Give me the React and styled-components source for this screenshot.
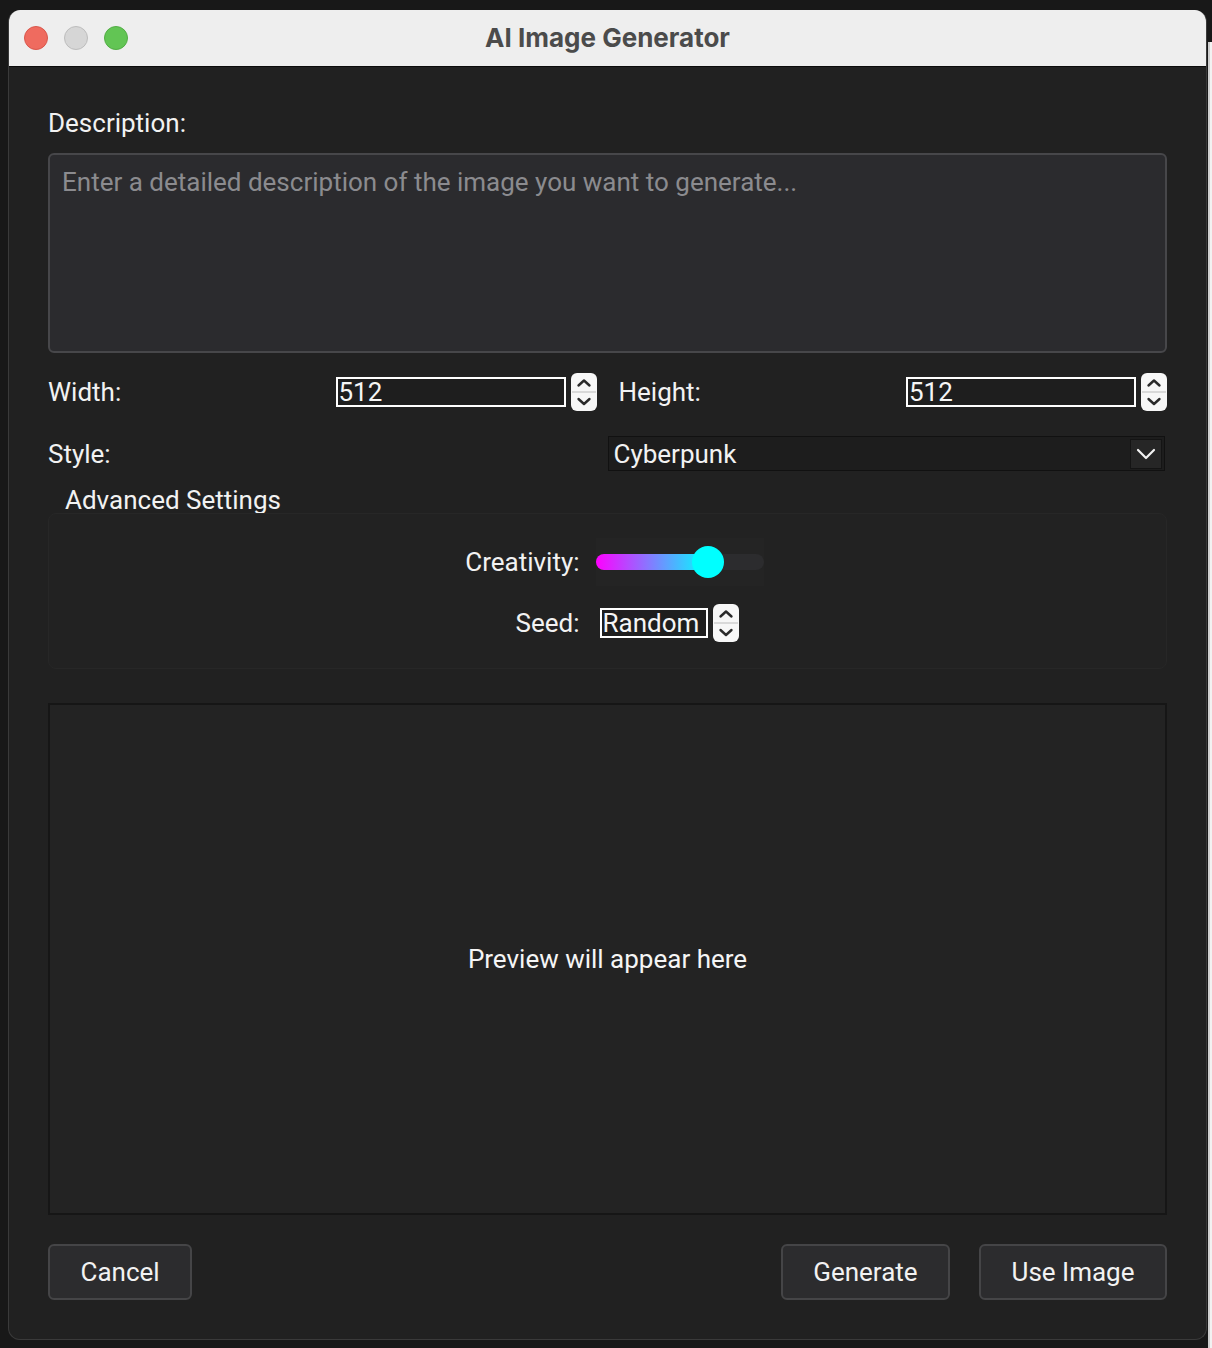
import React from "react";
import styled, { createGlobalStyle } from "styled-components";

const Global = createGlobalStyle`
  html, body { margin: 0; padding: 0; background: #181818; }
  body { font-family: Roboto, "Noto Sans", "Liberation Sans", sans-serif; }
  * { box-sizing: border-box; }
`;

const Desktop = styled.div`
  display: flex;
  align-items: flex-start;
  padding: 10px 0 9px 8px;
  width: 1212px;
`;

const BackWindow = styled.div`
  flex-shrink: 0;
  width: 4px;
  height: 1306px;
  margin-top: 32px;
  margin-left: 1px;
  background: linear-gradient(90deg, #cfcfcf 0 2px, #f2f2f2 2px);
`;

const Window = styled.div`
  flex-shrink: 0;
  width: 1199px;
  background: #212121;
  border-radius: 12px;
  border: 1px solid #3a3a3a;
  border-top: none;
  overflow: hidden;
  display: flex;
  flex-direction: column;
`;

const TitleBar = styled.div`
  position: relative;
  height: 57px;
  background: #eeeeee;
  border-bottom: 1px solid #0c0c0c;
  display: flex;
  align-items: center;
  justify-content: center;
`;

const Lights = styled.div`
  position: absolute;
  left: 15px;
  top: 16px;
  display: flex;
  gap: 16px;
`;

const Light = styled.span`
  width: 24px;
  height: 24px;
  border-radius: 50%;
  background: ${(p) => p.$c};
  border: 1px solid ${(p) => p.$b};
`;

const Title = styled.div`
  font-family: Inter, Roboto, "Liberation Sans", sans-serif;
  font-weight: 700;
  font-size: 26px;
  color: #4b4b4b;
  margin-top: -2px;
`;

const Content = styled.div`
  display: flex;
  flex-direction: column;
  padding: 41px 39px 39px 39px;
  color: #f2f2f2;
`;

const Label = styled.div`
  font-size: 26px;
  line-height: 30px;
  color: #f2f2f2;
  white-space: nowrap;
  text-align: ${(p) => p.$align || "left"};
`;

const TextArea = styled.textarea`
  margin-top: 15px;
  height: 200px;
  width: 100%;
  resize: none;
  background: #2b2b2e;
  border: 2px solid #47474a;
  border-radius: 6px;
  padding: 12px 12px;
  font-family: Roboto, "Liberation Sans", sans-serif;
  font-size: 26px;
  color: #f2f2f2;
  outline: none;
  &::placeholder { color: #8b8b8f; }
`;

const SizeRow = styled.div`
  margin-top: 20px;
  display: grid;
  grid-template-columns: 1fr 1fr;
  column-gap: 22px;
`;

const Field = styled.div`
  display: flex;
  align-items: center;
  height: 38px;
`;

const Grow = styled.div`
  flex: 1;
`;

const NumInput = styled.div`
  width: ${(p) => p.$w}px;
  height: 30px;
  border: 2px solid #ffffff;
  background: #1e1e1e;
  font-size: 26px;
  line-height: 27px;
  color: #f5f5f5;
  padding-left: 1px;
  margin-right: 5px;
  overflow: hidden;
`;

const SpinBox = styled.div`
  width: 26px;
  height: 38px;
  border-radius: 6px;
  background: #f7f7f7;
  display: flex;
`;

const Spinner = () => (
  <SpinBox>
    <svg width="26" height="38" viewBox="0 0 26 38">
      <line x1="1" y1="19" x2="25" y2="19" stroke="#cfcfcf" strokeWidth="1.5" />
      <polyline points="7.5,12.5 13,7.5 18.5,12.5" fill="none" stroke="#2a2a2a" strokeWidth="2.4" strokeLinecap="round" strokeLinejoin="round" />
      <polyline points="7.5,26 13,31 18.5,26" fill="none" stroke="#2a2a2a" strokeWidth="2.4" strokeLinecap="round" strokeLinejoin="round" />
    </svg>
  </SpinBox>
);

const StyleRow = styled.div`
  margin-top: 25px;
  display: grid;
  grid-template-columns: 1fr 1fr;
  align-items: center;
`;

const Combo = styled.div`
  height: 35px;
  margin-right: 2px;
  background: #1d1d1d;
  border: 1px solid #111111;
  display: flex;
  align-items: center;
  justify-content: space-between;
  padding: 0 2px 0 5px;
`;

const ComboText = styled.span`
  font-size: 26px;
  color: #f2f2f2;
`;

const ComboButton = styled.div`
  width: 32px;
  height: 30px;
  background: #262626;
  border: 1px solid #141414;
  display: flex;
  align-items: center;
  justify-content: center;
`;

const GroupTitle = styled.div`
  margin-top: 16px;
  padding-left: 17px;
  font-size: 26px;
  line-height: 26px;
  color: #f2f2f2;
`;

const GroupBox = styled.div`
  height: 156px;
  border: 1px solid #272727;
  border-radius: 8px;
  background: #222222;
  display: grid;
  grid-template-columns: 116px 168px;
  column-gap: 16px;
  row-gap: 18px;
  justify-content: center;
  align-content: start;
  align-items: center;
  padding: 24px 0 0 12px;
`;

const SliderBox = styled.div`
  height: 48px;
  background: #242424;
  display: flex;
  align-items: center;
`;

const Track = styled.div`
  position: relative;
  width: 168px;
  height: 16px;
  border-radius: 8px;
  background: #2c2c2e;
`;

const Fill = styled.div`
  height: 16px;
  border-radius: 8px;
  background: linear-gradient(90deg, #ff00ff, #00ffff);
`;

const Handle = styled.div`
  position: absolute;
  top: -8px;
  width: 32px;
  height: 32px;
  margin-left: -16px;
  border-radius: 50%;
  background: #00ffff;
`;

const SeedField = styled.div`
  display: flex;
  align-items: center;
  padding-left: 4px;
`;

const Preview = styled.div`
  margin-top: 34px;
  height: 512px;
  border: 2px solid #161616;
  background: #232323;
  display: flex;
  align-items: center;
  justify-content: center;
  font-size: 26px;
  color: #f5f5f5;
`;

const ButtonRow = styled.div`
  margin-top: 29px;
  display: flex;
  align-items: center;
`;

const Button = styled.button`
  height: 56px;
  padding: 0 30.5px;
  margin-left: ${(p) => p.$ml || 0}px;
  background: #2c2c2e;
  border: 2px solid #454547;
  border-radius: 6px;
  font-family: Roboto, "Liberation Sans", sans-serif;
  font-size: 26px;
  color: #f2f2f2;
`;

export default function App() {
  const creativity = 0.667;
  return (
    <>
      <Global />
      <Desktop>
        <Window>
          <TitleBar>
            <Lights>
              <Light $c="#ef6b5f" $b="#d9574c" />
              <Light $c="#d6d6d6" $b="#bdbdbd" />
              <Light $c="#62c554" $b="#52ad45" />
            </Lights>
            <Title>AI Image Generator</Title>
          </TitleBar>
          <Content>
            <Label>Description:</Label>
            <TextArea placeholder="Enter a detailed description of the image you want to generate..." />
            <SizeRow>
              <Field>
                <Grow><Label>Width:</Label></Grow>
                <NumInput $w={230}>512</NumInput>
                <Spinner />
              </Field>
              <Field>
                <Grow><Label>Height:</Label></Grow>
                <NumInput $w={230}>512</NumInput>
                <Spinner />
              </Field>
            </SizeRow>
            <StyleRow>
              <Label>Style:</Label>
              <Combo>
                <ComboText>Cyberpunk</ComboText>
                <ComboButton>
                  <svg width="22" height="14" viewBox="0 0 22 14">
                    <polyline points="3,3 11,11 19,3" fill="none" stroke="#f2f2f2" strokeWidth="2.2" strokeLinecap="round" strokeLinejoin="round" />
                  </svg>
                </ComboButton>
              </Combo>
            </StyleRow>
            <GroupTitle>Advanced Settings</GroupTitle>
            <GroupBox>
              <Label $align="right">Creativity:</Label>
              <SliderBox>
                <Track>
                  <Fill style={{ width: `${creativity * 100}%` }} />
                  <Handle style={{ left: `${creativity * 100}%` }} />
                </Track>
              </SliderBox>
              <Label $align="right">Seed:</Label>
              <SeedField>
                <NumInput $w={108}>Random</NumInput>
                <Spinner />
              </SeedField>
            </GroupBox>
            <Preview>Preview will appear here</Preview>
            <ButtonRow>
              <Button>Cancel</Button>
              <Grow />
              <Button>Generate</Button>
              <Button $ml={29}>Use Image</Button>
            </ButtonRow>
          </Content>
        </Window>
        <BackWindow />
      </Desktop>
    </>
  );
}
